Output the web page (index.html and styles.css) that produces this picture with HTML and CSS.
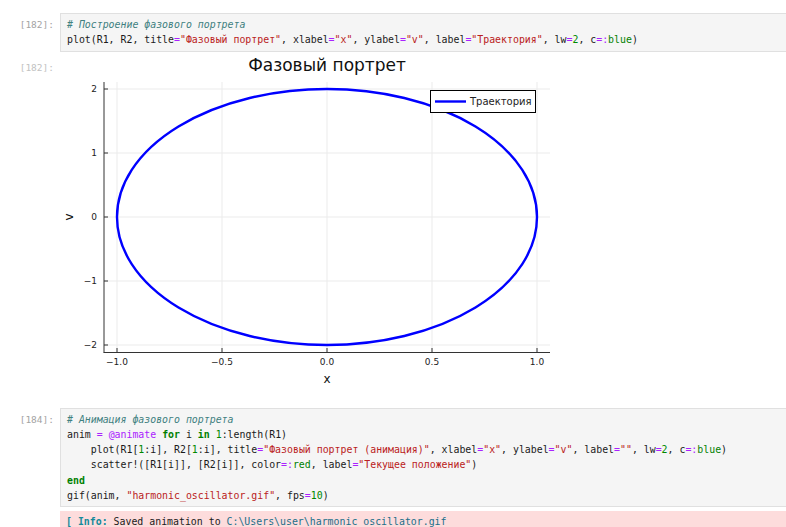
FILE: index.html
```html
<!DOCTYPE html>
<html lang="ru">
<head>
<meta charset="utf-8">
<title>Notebook</title>
<link rel="stylesheet" href="styles.css">
</head>
<body>
<div class="notebook">
  <div class="cell">
    <div class="row">
      <div class="prompt in">[182]:</div>
      <pre class="input"><span class="c"># Построение фазового портрета</span>
plot(R1, R2, title<span class="o">=</span><span class="s">"Фазовый портрет"</span>, xlabel<span class="o">=</span><span class="s">"x"</span>, ylabel<span class="o">=</span><span class="s">"v"</span>, label<span class="o">=</span><span class="s">"Траектория"</span>, lw<span class="o">=</span><span class="n">2</span>, c<span class="o">=:</span><span class="b">blue</span>)</pre>
    </div>
    <div class="row out-row">
      <div class="prompt out">[182]:</div>
      <div class="output">
        <svg class="plot" width="500" height="336" viewBox="0 0 500 336">
          <rect x="0" y="0" width="500" height="336" fill="#fff"/>
          <g stroke="#ebebeb" stroke-width="1">
            <line x1="57" y1="26" x2="57" y2="296"/>
            <line x1="162" y1="26" x2="162" y2="296"/>
            <line x1="267" y1="26" x2="267" y2="296"/>
            <line x1="372" y1="26" x2="372" y2="296"/>
            <line x1="477" y1="26" x2="477" y2="296"/>
            <line x1="44" y1="33" x2="490" y2="33"/>
            <line x1="44" y1="97" x2="490" y2="97"/>
            <line x1="44" y1="161" x2="490" y2="161"/>
            <line x1="44" y1="225" x2="490" y2="225"/>
            <line x1="44" y1="289" x2="490" y2="289"/>
          </g>
          <g stroke="#333" stroke-width="1">
            <line x1="44" y1="26" x2="44" y2="296.5"/>
            <line x1="43.5" y1="296.5" x2="490" y2="296.5"/>
            <line x1="44" y1="33" x2="48" y2="33"/>
            <line x1="44" y1="97" x2="48" y2="97"/>
            <line x1="44" y1="161" x2="48" y2="161"/>
            <line x1="44" y1="225" x2="48" y2="225"/>
            <line x1="44" y1="289" x2="48" y2="289"/>
            <line x1="57" y1="296" x2="57" y2="292"/>
            <line x1="162" y1="296" x2="162" y2="292"/>
            <line x1="267" y1="296" x2="267" y2="292"/>
            <line x1="372" y1="296" x2="372" y2="292"/>
            <line x1="477" y1="296" x2="477" y2="292"/>
          </g>
          <ellipse cx="267" cy="161" rx="210" ry="128" fill="none" stroke="#0000ff" stroke-width="2.4"/>
          <text class="title" x="267" y="15" text-anchor="middle">Фазовый портрет</text>
          <g class="tick" text-anchor="end">
            <text x="37" y="36">2</text>
            <text x="37" y="100">1</text>
            <text x="37" y="164">0</text>
            <text x="37" y="228">−1</text>
            <text x="37" y="292">−2</text>
          </g>
          <g class="tick" text-anchor="middle">
            <text x="57" y="309">−1.0</text>
            <text x="162" y="309">−0.5</text>
            <text x="267" y="309">0.0</text>
            <text x="372" y="309">0.5</text>
            <text x="477" y="309">1.0</text>
          </g>
          <text class="guide" x="267" y="327" text-anchor="middle">x</text>
          <text class="guide" x="0" y="0" text-anchor="middle" transform="translate(13 161) rotate(-90)">v</text>
          <rect x="370.5" y="34.5" width="105" height="22" fill="#fff" stroke="#000" stroke-width="1"/>
          <line x1="375" y1="45.5" x2="406" y2="45.5" stroke="#0000ff" stroke-width="2.4"/>
          <text class="legend" x="410" y="49">Траектория</text>
        </svg>
      </div>
    </div>
  </div>

  <div class="cell cell-2">
    <div class="row">
      <div class="prompt in">[184]:</div>
      <pre class="input"><span class="c"># Анимация фазового портрета</span>
anim <span class="o">=</span> <span class="m">@animate</span> <span class="k">for</span> i <span class="k">in</span> <span class="n">1</span>:length(R1)
    plot(R1[<span class="n">1</span>:i], R2[<span class="n">1</span>:i], title<span class="o">=</span><span class="s">"Фазовый портрет (анимация)"</span>, xlabel<span class="o">=</span><span class="s">"x"</span>, ylabel<span class="o">=</span><span class="s">"v"</span>, label<span class="o">=</span><span class="s">""</span>, lw<span class="o">=</span><span class="n">2</span>, c<span class="o">=:</span><span class="b">blue</span>)
    scatter!([R1[i]], [R2[i]], color<span class="o">=:</span><span class="b">red</span>, label<span class="o">=</span><span class="s">"Текущее положение"</span>)
<span class="k">end</span>
gif(anim, <span class="s">"harmonic_oscillator.gif"</span>, fps<span class="o">=</span><span class="n">10</span>)</pre>
    </div>
    <div class="row err-row">
      <div class="prompt"></div>
      <pre class="stderr"><span class="info">[ Info:</span> Saved animation to <span class="path">C:\Users\user\harmonic_oscillator.gif</span></pre>
    </div>
  </div>
</div>
</body>
</html>
```
FILE: styles.css
```css
html, body {
  margin: 0;
  padding: 0;
  overflow: hidden;
  background: #fff;
}

.notebook {
  padding-top: 13px;
  font-family: "DejaVu Sans Mono", "Liberation Mono", monospace;
  font-size: 9.9px;
  color: #1a1a1a;
}

.row {
  display: flex;
  align-items: flex-start;
}

.prompt {
  flex: 0 0 54px;
  width: 54px;
  padding-right: 6px;
  padding-top: 4px;
  text-align: right;
  line-height: 15.3px;
  font-size: 9.5px;
  white-space: pre;
}

.prompt.in { color: #a3a3a3; }
.prompt.out { color: #c2c2c2; }

.input {
  flex: 1;
  min-width: 0;
  margin: 0;
  padding: 3px 6px;
  background: #f5f5f5;
  border: 1px solid #e0e0e0;
  border-right: none;
  font-family: inherit;
  font-size: 9.9px;
  line-height: 15.3px;
  white-space: pre;
  overflow: hidden;
  color: #1a1a1a;
}

.c { color: #408080; font-style: italic; }
.s { color: #ba2121; }
.o { color: #aa22ff; }
.n { color: #008800; }
.b { color: #008000; }
.k { color: #008000; font-weight: bold; }
.m { color: #aa22ff; }

.out-row {
  margin-top: 4px;
}

.output {
  flex: 1;
}

.plot {
  display: block;
  font-family: "DejaVu Sans", sans-serif;
}

.plot text { fill: #222; }
.plot .title { font-size: 17px; fill: #111; }
.plot .tick { font-size: 9px; }
.plot .guide { font-size: 12px; fill: #111; }
.plot .legend { font-size: 10px; }

.cell-2 {
  margin-top: 16px;
}

.err-row {
  margin-top: 4px;
}

.stderr {
  flex: 1;
  min-width: 0;
  margin: 0;
  padding: 3px 6px;
  background: #fddcdc;
  font-family: inherit;
  font-size: 9.9px;
  line-height: 15.3px;
  white-space: pre;
  overflow: hidden;
  color: #1a1a1a;
}

.info { color: #138a9a; font-weight: bold; }
.path { color: #1a6f8a; }
```
